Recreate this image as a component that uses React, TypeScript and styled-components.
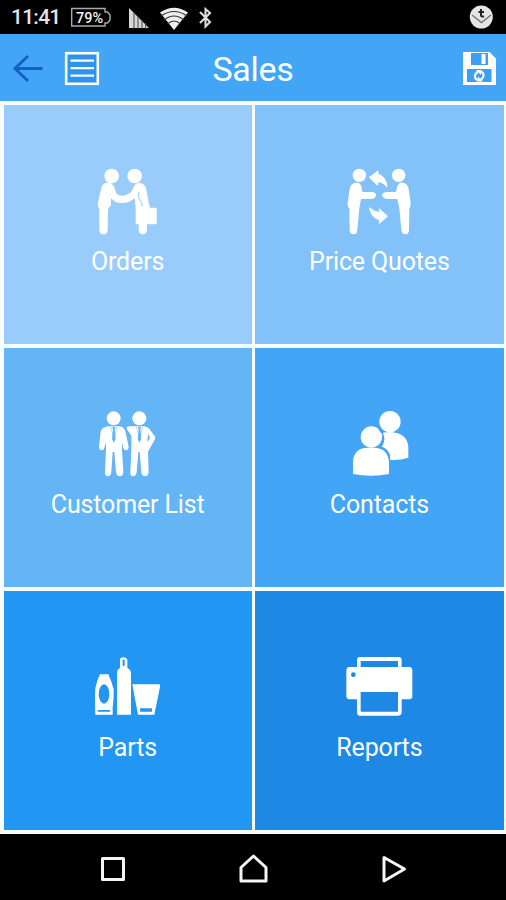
import React from 'react';
import styled, { createGlobalStyle } from 'styled-components';

const GlobalStyle = createGlobalStyle`
  * { box-sizing: border-box; }
  body { margin: 0; background: #000; }
`;

const Screen = styled.div`
  display: flex;
  flex-direction: column;
  width: 506px;
  height: 900px;
  overflow: hidden;
  background: #000;
  color: #fff;
  font-family: Roboto, sans-serif;
`;

const StatusBar = styled.header`
  display: flex;
  align-items: center;
  flex: 0 0 34px;
  padding: 0 13px 0 11px;
`;

const Clock = styled.time`
  width: 60px;
  font-size: 21px;
  line-height: 34px;
  font-weight: 500;
  letter-spacing: -0.75px;
  color: #e4e4e4;
  white-space: nowrap;
`;

const StatusIcons = styled.svg`
  display: block;
  width: 150px;
  height: 34px;
`;

const BatteryText = styled.text`
  font: 500 14.5px Roboto, sans-serif;
  fill: #f2f2f2;
`;

const NoticeIcon = styled.svg`
  width: 24px;
  height: 34px;
  margin-left: auto;
`;

const TitleBar = styled.div`
  display: grid;
  grid-template-columns: 106px 1fr 106px;
  align-items: center;
  flex: 0 0 67px;
  background: #42a5f5;
`;

const BarIcons = styled.svg`
  display: block;
  width: 106px;
  height: 67px;
`;

const Title = styled.h1`
  margin: 0;
  padding-top: 3px;
  text-align: center;
  font-size: 34px;
  font-weight: 400;
  line-height: 40px;
  letter-spacing: -0.3px;
`;

const TileGrid = styled.main`
  display: grid;
  grid-template-columns: 1fr 1fr;
  grid-template-rows: repeat(3, 1fr);
  gap: 3.5px;
  flex: 0 0 732.5px;
  padding: 3.7px 2.5px 3.4px 3.5px;
  background: #f7fcff;
`;

const Tile = styled.button<{ $color: string }>`
  display: flex;
  flex-direction: column;
  align-items: center;
  justify-content: flex-start;
  min-width: 0;
  padding: 50px 0 0;
  border: 0;
  border-radius: 0;
  background: ${({ $color }) => $color};
  color: #fff;
  font-family: inherit;
`;

const TileIcon = styled.svg`
  display: block;
  flex: none;
  width: 95px;
  height: 90px;
`;

const Label = styled.span`
  margin-top: 1px;
  font-size: 25px;
  line-height: 32px;
  letter-spacing: -0.15px;
  white-space: nowrap;
`;

const NavBar = styled.nav`
  display: flex;
  justify-content: center;
  flex: 1;
`;

const NavIcon = styled.svg`
  width: 140px;
  height: 66px;
  fill: none;
  stroke: #f5f5f5;
  stroke-width: 3;
  stroke-linejoin: round;
`;

const Orders = () => (
  <>
    <circle cx="96" cy="63" r="22" />
    <circle cx="165" cy="63" r="22" />
    <path d="M77 84Q92 79 102 92L111 116Q120 125 137 121L154 112L165 91Q171 82 183 85Q195 86 199 100L211 158H231V208H202V225Q201 238 190 238Q177 238 177 225V208H168V160L165 130L149 140Q130 147 108 142L94 130V150L85 162L84 224Q83 238 71 238Q59 238 59 224V159Q52 154 55 142L64 103Q67 86 77 84Z" />
    <path d="M178 111Q172 122 180 134Q190 143 187 155" fill="none" stroke="#99ccfa" strokeWidth="3" />
    <path d="M202 120L208 150" stroke="#c8e4fd" strokeWidth="2" />
  </>
);

const Quotes = () => (
  <>
    <circle cx="73" cy="61" r="20" />
    <circle cx="191" cy="61" r="20" />
    <path d="M58 84Q72 78 79 93L82 111L109 111Q124 112 123 121Q122 130 108 132L78 132L73 160L67 225Q66 238 55 238Q44 237 44 224L43 160Q37 156 38 144L44 103Q47 86 58 84Z" />
    <path d="M207 84Q194 78 187 93L183 111L157 111Q142 112 141 121Q142 130 157 132L187 132L193 160L199 225Q201 238 212 238Q222 237 222 224L223 160Q228 156 227 144L221 103Q218 86 207 84Z" />
    <path d="M103 67L129 48V58Q154 65 156 96Q147 82 128 80V91Z" strokeWidth="3" stroke="#fff" strokeLinejoin="round" />
    <path d="M103 158Q117 170 133 172V161L158 184L133 206V195Q108 188 103 158Z" strokeWidth="2" stroke="#fff" strokeLinejoin="round" />
  </>
);

const Customers = () => (
  <>
    <circle cx="102" cy="57" r="21" />
    <circle cx="179" cy="57" r="21" />
    <path d="M88 81H118Q133 82 137 96L147 142Q147 151 139 153Q133 153 131 146L127 128V151L131 218Q130 231 120 231Q110 230 109 218L104 158H99L95 218Q94 231 84 231Q75 230 76 218L79 151V127L74 146Q72 153 66 153Q58 151 58 142L63 97Q67 82 88 81Z" />
    <path d="M142 82Q147 80 157 81H193Q207 83 213 94L225 110Q229 116 223 125L209 150L205 157L207 218Q206 231 196 231Q185 230 185 218L180 158H176L171 218Q169 231 159 231Q151 230 152 218L155 151V109L145 94Q138 85 142 82ZM205 103L203 129L211 116Z" fillRule="evenodd" />
    <path d="M98 82H107L105 91L108 119L102 130L97 119L100 91ZM175 82H184L182 91L185 119L179 130L174 119L177 91Z" fill="#64b5f6" />
    <path d="M93 82L101 111M112 82L105 111M170 82L178 111M189 82L182 111" stroke="#64b5f6" strokeWidth="1.5" />
  </>
);

const Contacts = () => (
  <>
    <circle cx="165" cy="67" r="32" />
    <path d="M134 105Q144 98 166 98Q217 101 220 143V175Q191 184 165 181V169Q161 151 140 143Q150 127 144 112Q140 105 134 105Z" />
    <circle cx="109" cy="113" r="32" />
    <path d="M54 224V187Q56 146 97 145H120Q159 148 162 188V224Q109 235 54 224Z" />
    <path d="M132 90Q158 115 136 143Q163 151 164 180" fill="none" stroke="#42a5f5" strokeWidth="4" />
  </>
);

const Parts = () => (
  <>
    <path d="M61 90H86Q96 112 102 135Q103 160 99 190V211H47Q45 160 47 132Q52 107 61 90Z" />
    <path d="M112 211V85Q113 75 121 70V46Q122 39 132 39Q141 40 143 46V70Q154 77 154 87V211Z" />
    <path d="M158 120H241V127L224 211H175Z" />
    <g fill="#2196f3">
      <ellipse cx="73" cy="149" rx="16" ry="29" />
      <rect x="54" y="197" width="37" height="5" rx="1" />
      <rect x="129" y="46" width="6" height="19" rx="2" />
      <rect x="181" y="192" width="36" height="10" rx="1" />
    </g>
  </>
);

const Reports = () => (
  <>
    <path d="M73 38H192Q200 39 200 47V68H225Q231 69 232 76V159Q230 165 223 165H200V206Q199 213 191 214H73Q66 213 66 205V165H42Q35 164 34 157V76Q35 69 42 68H66V46Q66 39 73 38ZM77 50V68H189V50ZM77 143V202H189V143Z" fillRule="evenodd" />
    <circle cx="55" cy="91" r="7" fill="#1e88e5" />
  </>
);

const tiles = [
  { label: 'Orders', color: '#99ccfa', view: '1 0 285 270', Icon: Orders },
  { label: 'Price Quotes', color: '#82c2f8', view: '-9 0 285 270', Icon: Quotes },
  { label: 'Customer List', color: '#64b5f6', view: '1 -4 285 270', Icon: Customers },
  { label: 'Contacts', color: '#42a5f5', view: '-9 -4 285 270', Icon: Contacts },
  { label: 'Parts', color: '#2196f3', view: '1 -10 285 270', Icon: Parts },
  { label: 'Reports', color: '#1e88e5', view: '-9 -10 285 270', Icon: Reports },
];

export default function App() {
  return (
    <Screen>
      <GlobalStyle />
      <StatusBar>
        <Clock>11:41</Clock>
        <StatusIcons viewBox="71 0 150 34">
          <path d="M71.7 8.500H105V12H107.500L110 15V20L107.500 23H105V26H71.700Z" fill="none" stroke="#aaa" strokeWidth="1.4" />
          <BatteryText x="76" y="23" textLength="27" lengthAdjust="spacingAndGlyphs">79%</BatteryText>
          <path d="M129 8L149 28H129Z" fill="#d8d8d8" />
          <path d="M134 12V29M138 16V29M142 20V29M145.700 23V29" stroke="#444" strokeWidth="1" />
          <path d="M160 12.500Q174 3 188 12.500L174 30Z" fill="#eee" />
          <path d="M161 16Q174 7 187 16M164 20Q174 12 184 20M167.500 24Q174 18 180.500 24" fill="none" stroke="#333" strokeWidth="1.1" />
          <path d="M200 12L210 22L205.500 26.500V9L210 13L200 23" fill="none" stroke="#ddd" strokeWidth="2.1" />
        </StatusIcons>
        <NoticeIcon viewBox="469 0 24 34">
          <circle cx="481.300" cy="17" r="11.500" fill="#e5e5e5" />
          <path d="M472 15L481.500 22.500L491 15" fill="none" stroke="#777" strokeWidth="1.5" />
          <path d="M481 9V15Q481 17 484 16.500M478.500 12H484" fill="none" stroke="#222" strokeWidth="2" />
        </NoticeIcon>
      </StatusBar>
      <TitleBar>
        <BarIcons viewBox="0 34 106 67">
          <path d="M28 56L15 68.500L28 81M15 68.500H42.500" fill="none" stroke="#1560c4" strokeWidth="3" />
          <rect x="66.200" y="53.200" width="31.600" height="30.600" fill="#2c94ec" stroke="#fff" strokeWidth="2.600" />
          <path d="M70.500 60.700H94M70.500 68.200H94M70.500 75.700H94" stroke="#fff" strokeWidth="2.300" />
        </BarIcons>
        <Title>Sales</Title>
        <BarIcons viewBox="400 34 106 67">
          <path d="M463 52H489.500L496 58.500V85H463Z" fill="#fff" />
          <path d="M471 53H488V65H471ZM467 69H491.500V82H467Z" fill="#3c9ff1" />
          <rect x="481.500" y="54" width="4" height="10" fill="#fff" />
          <path d="M477.500 80.500Q472 76 478 71.500M481 71Q486.500 75.500 480.500 80" fill="none" stroke="#fff" strokeWidth="2.200" />
          <path d="M476 70H481V75ZM477.500 81.500H483L478 76.500Z" fill="#fff" />
        </BarIcons>
      </TitleBar>
      <TileGrid>
        {tiles.map(({ label, color, view, Icon }) => (
          <Tile key={label} $color={color}>
            <TileIcon viewBox={view} fill="#fff"><Icon /></TileIcon>
            <Label>{label}</Label>
          </Tile>
        ))}
      </TileGrid>
      <NavBar>
        <NavIcon viewBox="43 834 140 66"><rect x="102.500" y="858.500" width="21" height="21" /></NavIcon>
        <NavIcon viewBox="183 834 140 66"><path d="M253.500 856L266 867.500V881H241V867.500Z" /></NavIcon>
        <NavIcon viewBox="323 834 140 66"><path d="M384 857.500L404.500 869L384 881Z" /></NavIcon>
      </NavBar>
    </Screen>
  );
}
